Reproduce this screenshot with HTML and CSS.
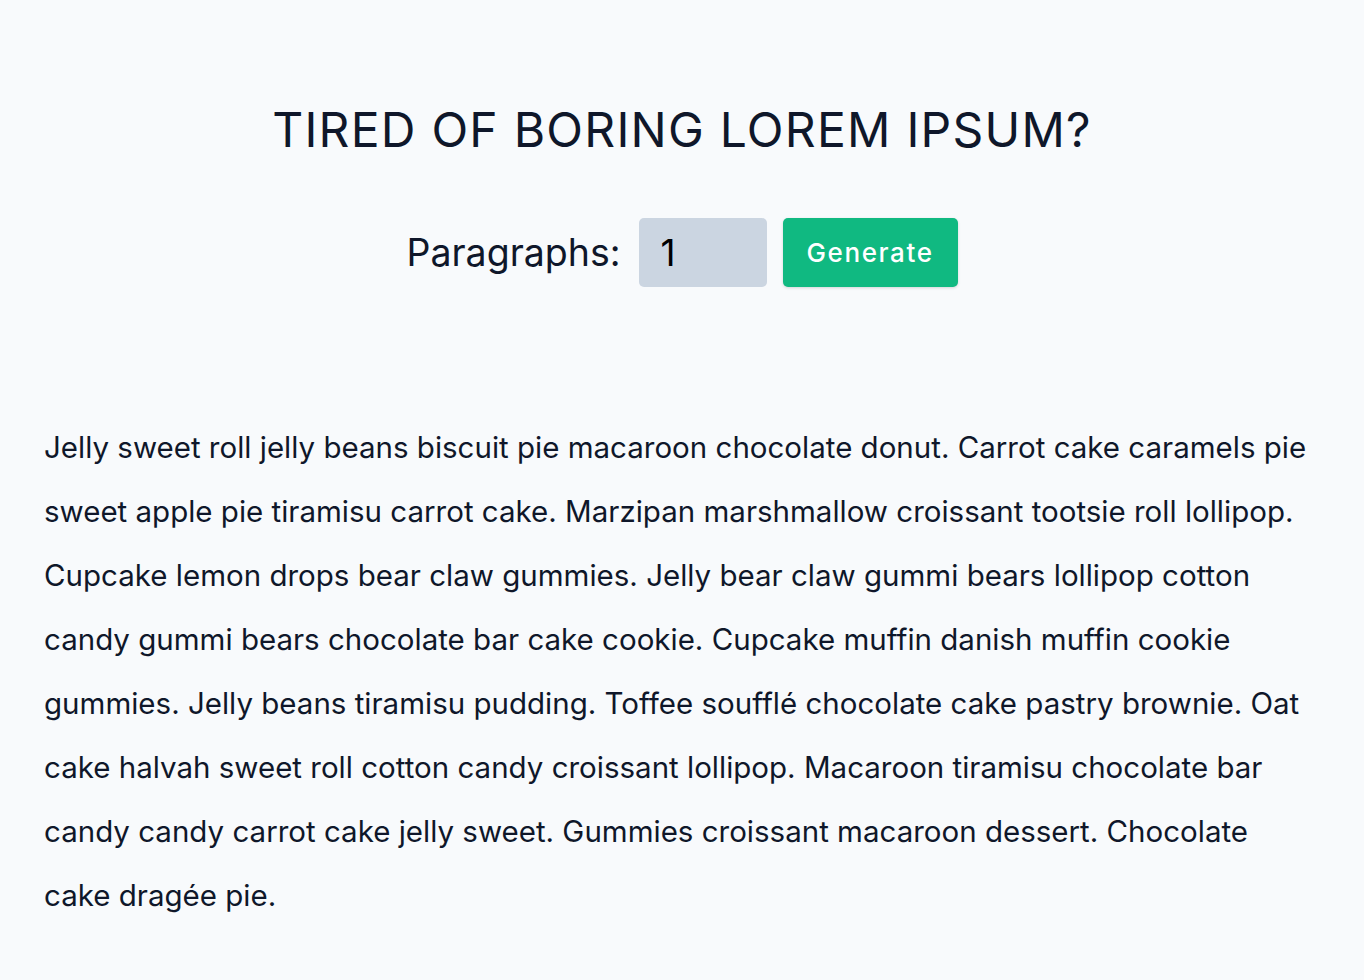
FILE: index.html
```html
<!DOCTYPE html>
<html lang="en">
<head>
<meta charset="utf-8">
<title>Lorem Ipsum</title>
<link rel="stylesheet" href="styles.css">
</head>
<body>
<section class="page">
  <h3 class="title">TIRED OF BORING LOREM IPSUM?</h3>
  <form class="lorem-form">
    <label class="label" for="amount">Paragraphs:</label>
    <input class="amount" type="number" id="amount" value="1">
    <button class="btn" type="button">Generate</button>
  </form>
  <article class="lorem-text">
    <p>Jelly sweet roll jelly beans biscuit pie macaroon chocolate donut. Carrot cake caramels pie sweet apple pie tiramisu carrot cake. Marzipan marshmallow croissant tootsie roll lollipop. Cupcake lemon drops bear claw gummies. Jelly bear claw gummi bears lollipop cotton candy gummi bears chocolate bar cake cookie. Cupcake muffin danish muffin cookie gummies. Jelly beans tiramisu pudding. Toffee soufflé chocolate cake pastry brownie. Oat cake halvah sweet roll cotton candy croissant lollipop. Macaroon tiramisu chocolate bar candy candy carrot cake jelly sweet. Gummies croissant macaroon dessert. Chocolate cake dragée pie.</p>
  </article>
</section>
</body>
</html>
```
FILE: styles.css
```css
* { box-sizing: border-box; }
html, body { margin: 0; padding: 0; }
body {
  background: #f8fafc;
  color: #0f172a;
  font-family: Inter, "Noto Sans", sans-serif;
}
.page {
  padding: 100px 44px 0;
}
.title {
  margin: 0;
  text-align: center;
  font-size: 48px;
  font-weight: 400;
  line-height: 60px;
  letter-spacing: 1.25px;
  color: #0f172a;
}
.lorem-form {
  margin-top: 58px;
  display: flex;
  justify-content: center;
  align-items: center;
  gap: 16px;
}
.label {
  font-size: 37.5px;
  margin-right: 2px;
  color: #0f172a;
}
.amount {
  width: 128px;
  height: 69px;
  border: none;
  border-radius: 5px;
  background: #cbd5e1;
  padding: 0 22px;
  font-family: Inter, "Noto Sans", sans-serif;
  font-size: 37px;
  color: #000;
  -moz-appearance: textfield;
}
.amount::-webkit-outer-spin-button,
.amount::-webkit-inner-spin-button { -webkit-appearance: none; margin: 0; }
.btn {
  width: 175px;
  height: 69px;
  border: none;
  border-radius: 5px;
  background: #10b981;
  color: #fff;
  font-family: Inter, "Noto Sans", sans-serif;
  font-size: 26px;
  font-weight: 500;
  letter-spacing: 1.6px;
  box-shadow: 0 1px 3px rgba(0,0,0,0.15);
}
.lorem-text {
  margin-top: 128px;
}
.lorem-text p {
  margin: 0;
  font-size: 29.5px;
  line-height: 64px;
  color: #0f172a;
}
```
